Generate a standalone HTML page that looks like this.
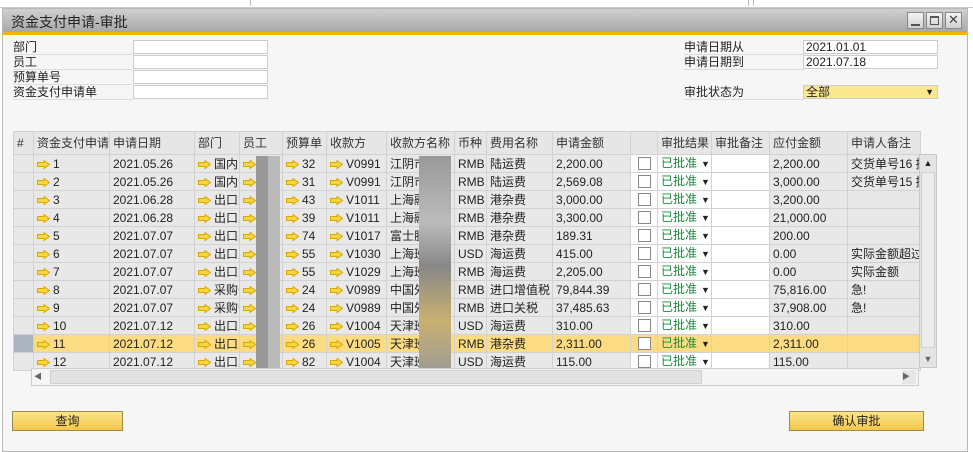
<!DOCTYPE html>
<html><head><meta charset="utf-8">
<style>
*{box-sizing:border-box;margin:0;padding:0}
body{width:973px;height:452px;overflow:hidden;background:#fff;font-family:"Liberation Sans","Noto Sans CJK SC",sans-serif;font-size:12px;color:#222;position:relative}
.top{position:absolute;left:0;top:0;width:973px;height:8px;background:#fff;border-bottom:1px solid #ccc}
.top i{position:absolute;top:0;height:6px;border-left:1px solid #bbb;border-bottom:1px solid #ccc}
.win{position:absolute;left:2px;top:8px;width:966px;height:444px;background:#f6f6f6;border:1px solid #b8b8b8}
.title{position:absolute;left:0;top:0;width:100%;height:23px;background:linear-gradient(#d0d0d0,#a8a8a8);font-size:14px;color:#222;padding:3px 8px}
.oline{position:absolute;left:0;top:23px;width:100%;height:3px;background:#f6b400}
.wb{position:absolute;top:3px;width:17px;height:17px;background:linear-gradient(#f4f4f4,#d0d0d0);border:1px solid #888}
.lbl{position:absolute;font-size:12px;border-bottom:1px solid #ddd;height:15px;line-height:14px}
.in{position:absolute;height:14px;background:#fff;border:1px solid #ccc;font-size:12px;line-height:12px;padding-left:2px}
table{position:absolute;left:10px;top:122px;width:907px;border-collapse:collapse;table-layout:fixed}
td,th{height:18px;max-height:18px;border:1px solid #d2d2d2;white-space:nowrap;overflow:hidden;font-weight:normal;text-align:left;padding:0 0 0 3px;font-size:12px;line-height:16px}
th{height:23px;background:#e6e6e6;color:#333}
td{background:#e8e8e8}
td.w{background:#fff}
tr.sel td{background:#fcdc82}
tr.sel td.n{background:#aab4c0}
.ar{display:inline-block;width:13px;height:9px;vertical-align:-1px;margin-right:3px}
.g{color:#1a8a3a}
.cb{display:inline-block;width:13px;height:13px;border:1px solid #888;background:#fff;vertical-align:-2px;margin-left:4px}
.dd{color:#222;font-size:9px;margin-left:4px}
.blur{position:absolute;background:#aaa}
.btn{position:absolute;height:20px;background:linear-gradient(#fbe48a,#f2c84a);border:1px solid #9a8a50;text-align:center;font-size:12px;line-height:18px}
</style></head><body>
<svg width="0" height="0" style="position:absolute"><defs><symbol id="a" viewBox="0 0 13 9"><path d="M0.5 2.5H7V0.5L12.5 4.5L7 8.5V6.5H0.5Z" fill="#f7d640" stroke="#d8a800" stroke-width="1"/></symbol></defs></svg>
<div class="top"><i style="left:250px"></i><i style="left:748px"></i><i style="left:753px"></i></div>
<div class="win">
<div class="title">资金支付申请-审批</div>
<div class="oline"></div>
<div class="wb" style="left:904px"><div style="position:absolute;left:3px;bottom:2px;width:9px;height:2px;background:#555"></div></div>
<div class="wb" style="left:923px"><div style="position:absolute;left:3px;top:3px;width:9px;height:9px;border:1px solid #555;border-top-width:2px"></div></div>
<div class="wb" style="left:942px;font-size:13px;line-height:14px;text-align:center;color:#444">✕</div>

<div class="lbl" style="left:10px;top:31px;width:120px">部门</div>
<div class="lbl" style="left:10px;top:46px;width:120px">员工</div>
<div class="lbl" style="left:10px;top:61px;width:120px">预算单号</div>
<div class="lbl" style="left:10px;top:76px;width:120px">资金支付申请单</div>
<div class="in" style="left:130px;top:31px;width:135px"></div>
<div class="in" style="left:130px;top:46px;width:135px"></div>
<div class="in" style="left:130px;top:61px;width:135px"></div>
<div class="in" style="left:130px;top:76px;width:135px"></div>

<div class="lbl" style="left:681px;top:31px;width:120px">申请日期从</div>
<div class="lbl" style="left:681px;top:46px;width:120px">申请日期到</div>
<div class="lbl" style="left:681px;top:76px;width:120px">审批状态为</div>
<div class="in" style="left:800px;top:31px;width:135px">2021.01.01</div>
<div class="in" style="left:800px;top:46px;width:135px">2021.07.18</div>
<div class="in" style="left:800px;top:76px;width:135px;background:#fbe78e">全部<span style="float:right;margin-right:3px;font-size:9px">▼</span></div>

<table>
<colgroup><col style="width:20px"><col style="width:76px"><col style="width:85px"><col style="width:45px"><col style="width:43px"><col style="width:44px"><col style="width:60px"><col style="width:68px"><col style="width:32px"><col style="width:66px"><col style="width:78px"><col style="width:27px"><col style="width:54px"><col style="width:58px"><col style="width:78px"><col style="width:73px"></colgroup>
<tr><th>#</th><th>资金支付申请</th><th>申请日期</th><th>部门</th><th>员工</th><th>预算单</th><th>收款方</th><th>收款方名称</th><th>币种</th><th>费用名称</th><th>申请金额</th><th></th><th>审批结果</th><th>审批备注</th><th>应付金额</th><th>申请人备注</th></tr>
<tr><td class="n"></td><td><svg class="ar"><use href="#a"/></svg>1</td><td>2021.05.26</td><td><svg class="ar"><use href="#a"/></svg>国内贸</td><td><svg class="ar"><use href="#a"/></svg></td><td><svg class="ar"><use href="#a"/></svg>32</td><td><svg class="ar"><use href="#a"/></svg>V0991</td><td>江阴市</td><td>RMB</td><td>陆运费</td><td>2,200.00</td><td class="w"><span class="cb"></span></td><td class="w g">已批准<span class="dd">▼</span></td><td class="w"></td><td>2,200.00</td><td>交货单号16 拣</td></tr>
<tr><td class="n"></td><td><svg class="ar"><use href="#a"/></svg>2</td><td>2021.05.26</td><td><svg class="ar"><use href="#a"/></svg>国内贸</td><td><svg class="ar"><use href="#a"/></svg></td><td><svg class="ar"><use href="#a"/></svg>31</td><td><svg class="ar"><use href="#a"/></svg>V0991</td><td>江阴市</td><td>RMB</td><td>陆运费</td><td>2,569.08</td><td class="w"><span class="cb"></span></td><td class="w g">已批准<span class="dd">▼</span></td><td class="w"></td><td>3,000.00</td><td>交货单号15 拣</td></tr>
<tr><td class="n"></td><td><svg class="ar"><use href="#a"/></svg>3</td><td>2021.06.28</td><td><svg class="ar"><use href="#a"/></svg>出口业</td><td><svg class="ar"><use href="#a"/></svg></td><td><svg class="ar"><use href="#a"/></svg>43</td><td><svg class="ar"><use href="#a"/></svg>V1011</td><td>上海融</td><td>RMB</td><td>港杂费</td><td>3,000.00</td><td class="w"><span class="cb"></span></td><td class="w g">已批准<span class="dd">▼</span></td><td class="w"></td><td>3,200.00</td><td></td></tr>
<tr><td class="n"></td><td><svg class="ar"><use href="#a"/></svg>4</td><td>2021.06.28</td><td><svg class="ar"><use href="#a"/></svg>出口业</td><td><svg class="ar"><use href="#a"/></svg></td><td><svg class="ar"><use href="#a"/></svg>39</td><td><svg class="ar"><use href="#a"/></svg>V1011</td><td>上海融</td><td>RMB</td><td>港杂费</td><td>3,300.00</td><td class="w"><span class="cb"></span></td><td class="w g">已批准<span class="dd">▼</span></td><td class="w"></td><td>21,000.00</td><td></td></tr>
<tr><td class="n"></td><td><svg class="ar"><use href="#a"/></svg>5</td><td>2021.07.07</td><td><svg class="ar"><use href="#a"/></svg>出口业</td><td><svg class="ar"><use href="#a"/></svg></td><td><svg class="ar"><use href="#a"/></svg>74</td><td><svg class="ar"><use href="#a"/></svg>V1017</td><td>富士胶</td><td>RMB</td><td>港杂费</td><td>189.31</td><td class="w"><span class="cb"></span></td><td class="w g">已批准<span class="dd">▼</span></td><td class="w"></td><td>200.00</td><td></td></tr>
<tr><td class="n"></td><td><svg class="ar"><use href="#a"/></svg>6</td><td>2021.07.07</td><td><svg class="ar"><use href="#a"/></svg>出口业</td><td><svg class="ar"><use href="#a"/></svg></td><td><svg class="ar"><use href="#a"/></svg>55</td><td><svg class="ar"><use href="#a"/></svg>V1030</td><td>上海班</td><td>USD</td><td>海运费</td><td>415.00</td><td class="w"><span class="cb"></span></td><td class="w g">已批准<span class="dd">▼</span></td><td class="w"></td><td>0.00</td><td>实际金额超过</td></tr>
<tr><td class="n"></td><td><svg class="ar"><use href="#a"/></svg>7</td><td>2021.07.07</td><td><svg class="ar"><use href="#a"/></svg>出口业</td><td><svg class="ar"><use href="#a"/></svg></td><td><svg class="ar"><use href="#a"/></svg>55</td><td><svg class="ar"><use href="#a"/></svg>V1029</td><td>上海班</td><td>RMB</td><td>海运费</td><td>2,205.00</td><td class="w"><span class="cb"></span></td><td class="w g">已批准<span class="dd">▼</span></td><td class="w"></td><td>0.00</td><td>实际金额</td></tr>
<tr><td class="n"></td><td><svg class="ar"><use href="#a"/></svg>8</td><td>2021.07.07</td><td><svg class="ar"><use href="#a"/></svg>采购部</td><td><svg class="ar"><use href="#a"/></svg></td><td><svg class="ar"><use href="#a"/></svg>24</td><td><svg class="ar"><use href="#a"/></svg>V0989</td><td>中国外</td><td>RMB</td><td>进口增值税</td><td>79,844.39</td><td class="w"><span class="cb"></span></td><td class="w g">已批准<span class="dd">▼</span></td><td class="w"></td><td>75,816.00</td><td>急!</td></tr>
<tr><td class="n"></td><td><svg class="ar"><use href="#a"/></svg>9</td><td>2021.07.07</td><td><svg class="ar"><use href="#a"/></svg>采购部</td><td><svg class="ar"><use href="#a"/></svg></td><td><svg class="ar"><use href="#a"/></svg>24</td><td><svg class="ar"><use href="#a"/></svg>V0989</td><td>中国外</td><td>RMB</td><td>进口关税</td><td>37,485.63</td><td class="w"><span class="cb"></span></td><td class="w g">已批准<span class="dd">▼</span></td><td class="w"></td><td>37,908.00</td><td>急!</td></tr>
<tr><td class="n"></td><td><svg class="ar"><use href="#a"/></svg>10</td><td>2021.07.12</td><td><svg class="ar"><use href="#a"/></svg>出口业</td><td><svg class="ar"><use href="#a"/></svg></td><td><svg class="ar"><use href="#a"/></svg>26</td><td><svg class="ar"><use href="#a"/></svg>V1004</td><td>天津班</td><td>USD</td><td>海运费</td><td>310.00</td><td class="w"><span class="cb"></span></td><td class="w g">已批准<span class="dd">▼</span></td><td class="w"></td><td>310.00</td><td></td></tr>
<tr class="sel"><td class="n"></td><td><svg class="ar"><use href="#a"/></svg>11</td><td>2021.07.12</td><td><svg class="ar"><use href="#a"/></svg>出口业</td><td><svg class="ar"><use href="#a"/></svg></td><td><svg class="ar"><use href="#a"/></svg>26</td><td><svg class="ar"><use href="#a"/></svg>V1005</td><td>天津班</td><td>RMB</td><td>港杂费</td><td>2,311.00</td><td class="w"><span class="cb"></span></td><td class="w g">已批准<span class="dd">▼</span></td><td class="w"></td><td>2,311.00</td><td></td></tr>
<tr><td class="n"></td><td><svg class="ar"><use href="#a"/></svg>12</td><td>2021.07.12</td><td><svg class="ar"><use href="#a"/></svg>出口业</td><td><svg class="ar"><use href="#a"/></svg></td><td><svg class="ar"><use href="#a"/></svg>82</td><td><svg class="ar"><use href="#a"/></svg>V1004</td><td>天津班</td><td>USD</td><td>海运费</td><td>115.00</td><td class="w"><span class="cb"></span></td><td class="w g">已批准<span class="dd">▼</span></td><td class="w"></td><td>115.00</td><td></td></tr>
</table>

<div class="blur" style="left:253px;top:147px;width:24px;height:214px;background:linear-gradient(90deg,#999 0 50%,#bbb 50%)"></div>
<div class="blur" style="left:416px;top:147px;width:32px;height:220px;background:linear-gradient(#999,#bbb 30%,#888 50%,#c8b070 75%,#999)"></div>

<div style="position:absolute;left:916px;top:145px;width:18px;height:214px;background:#e4e4e4;border:1px solid #c8c8c8">
<div style="height:16px;text-align:center;font-size:9px;line-height:16px">▲</div>
<div style="position:absolute;left:1px;top:17px;width:14px;height:176px;background:#ececec;border:1px solid #ccc"></div>
<div style="position:absolute;bottom:0;width:16px;height:16px;text-align:center;font-size:9px;line-height:16px;color:#666">▼</div>
</div>
<div style="position:absolute;left:28px;top:359px;width:888px;height:18px;background:#f5f5f5;border:1px solid #ccc">
<div style="position:absolute;left:2px;top:1px;width:14px;height:14px;font-size:8px;line-height:14px;color:#666">◀</div>
<div style="position:absolute;left:18px;top:1px;width:652px;height:14px;background:#e2e2e2;border:1px solid #d0d0d0"></div>
<div style="position:absolute;right:2px;top:1px;width:14px;height:14px;font-size:8px;line-height:14px;color:#666;background:#e6e6e6">▶</div>
</div>

<div class="btn" style="left:9px;top:402px;width:111px">查询</div>
<div class="btn" style="left:786px;top:402px;width:135px">确认审批</div>
</div>
</body></html>
